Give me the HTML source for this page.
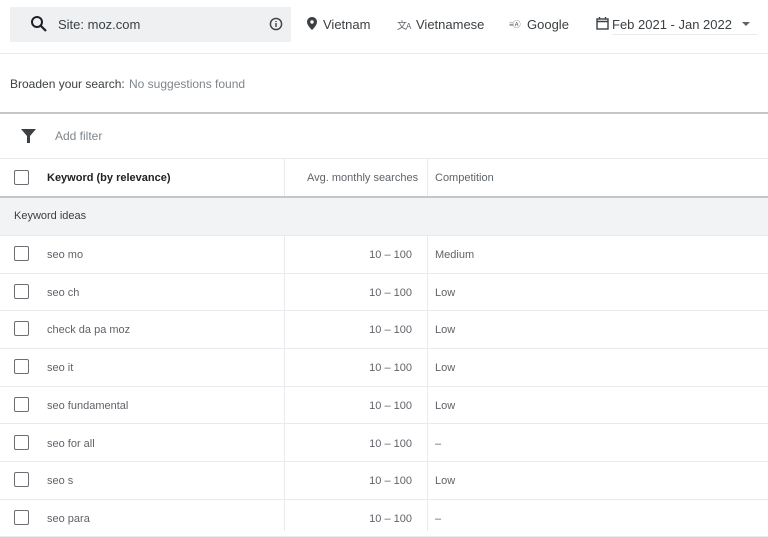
<!DOCTYPE html>
<html><head><meta charset="utf-8"><style>
*{margin:0;padding:0;box-sizing:border-box}
body{width:768px;height:531px;overflow:hidden;background:#fff;font-family:"Liberation Sans",Arial,sans-serif;color:#3c4043;position:relative}
.a{position:absolute}
.t{font-size:12px;color:#5f6368}
.hl{position:absolute;left:0;width:768px;height:1px;background:#e8eaed}
.cb{position:absolute;left:14px;width:15px;height:15px;border:1.6px solid #6b6f73;border-radius:2px}
.vl{position:absolute;width:1px;background:#e8eaed}
</style></head><body>
<div class="a" style="left:10px;top:7px;width:281px;height:35px;background:#eef0f2"></div>
<svg class="a" style="left:30px;top:15px" width="18" height="18" viewBox="0 0 18 18"><circle cx="7" cy="7" r="5" fill="none" stroke="#202124" stroke-width="2"/><path d="M11 11l5 5" stroke="#202124" stroke-width="2.2"/></svg>
<div class="a" style="left:58px;top:17px;font-size:13px;color:#3c4043">Site: moz.com</div>
<svg class="a" style="left:269px;top:17px" width="14" height="14" viewBox="0 0 14 14"><circle cx="7" cy="7" r="5.6" fill="none" stroke="#3c4043" stroke-width="1.4"/><path d="M7 6v4M7 4v1" stroke="#3c4043" stroke-width="1.4"/></svg>
<svg class="a" style="left:307px;top:17px" width="10" height="13" viewBox="0 0 10 13"><path d="M5 0C2.2 0 0 2.2 0 5c0 3.5 5 8 5 8s5-4.5 5-8C10 2.2 7.8 0 5 0z" fill="#3c4043"/><circle cx="5" cy="5" r="1.7" fill="#fff"/></svg>
<div class="a" style="left:323px;top:17px;font-size:13px">Vietnam</div>
<div class="a" style="left:397px;top:17px;font-size:10px;color:#5f6368;letter-spacing:-1px">文<span style="font-size:8px">A</span></div>
<div class="a" style="left:416px;top:17px;font-size:13px">Vietnamese</div>
<div class="a" style="left:509px;top:19px;font-size:8px;color:#5f6368;letter-spacing:-1px">≡Ⓐ</div>
<div class="a" style="left:527px;top:17px;font-size:13px">Google</div>
<svg class="a" style="left:596px;top:17px" width="13" height="13" viewBox="0 0 13 13"><rect x="1" y="2" width="11" height="10" fill="none" stroke="#3c4043" stroke-width="1.4"/><path d="M1 4.5h11M3.5 0v2.5M9.5 0v2.5" stroke="#3c4043" stroke-width="1.4"/></svg>
<div class="a" style="left:612px;top:17px;font-size:13px">Feb 2021 - Jan 2022</div>
<div class="a" style="left:742px;top:22px;width:0;height:0;border-left:4px solid transparent;border-right:4px solid transparent;border-top:4px solid #5f6368"></div>
<div class="a" style="left:612px;top:34px;width:145px;height:1px;background:#e8eaed"></div>
<div class="hl" style="top:53px"></div>
<div class="a" style="left:10px;top:77px;font-size:12px;color:#3c4043">Broaden your search:</div>
<div class="a" style="left:129px;top:77px;font-size:12px;color:#80868b">No suggestions found</div>
<div class="hl" style="top:112px;height:2px;background:#c4c7c9"></div>
<svg class="a" style="left:21px;top:129px" width="15" height="14" viewBox="0 0 15 14"><path d="M0 0h15L9 7v7H6V7z" fill="#3c4043"/></svg>
<div class="a" style="left:55px;top:129px;font-size:12px;color:#80868b">Add filter</div>
<div class="hl" style="top:158px"></div>
<div class="cb" style="top:170px"></div>
<div class="a" style="left:47px;top:172px;font-size:11px;font-weight:bold;color:#202124">Keyword (by relevance)</div>
<div class="a" style="left:307px;top:172px;font-size:11px;color:#5f6368">Avg. monthly searches</div>
<div class="a" style="left:435px;top:172px;font-size:11px;color:#5f6368">Competition</div>
<div class="vl" style="left:284px;top:158px;height:39px"></div>
<div class="vl" style="left:427px;top:158px;height:39px"></div>
<div class="hl" style="top:196px;height:2px;background:#c4c7c9"></div>
<div class="a" style="left:0;top:198px;width:768px;height:37px;background:#f1f3f4"></div>
<div class="a t" style="left:14px;top:210px;color:#3c4043;font-size:11px">Keyword ideas</div>
<div class="hl" style="top:235px"></div>
<div class="vl" style="left:284px;top:235px;height:296px"></div>
<div class="vl" style="left:427px;top:235px;height:296px"></div>
<div id="rows"></div>
<script>
var d=[["seo mo","Medium"],["seo ch","Low"],["check da pa moz","Low"],["seo it","Low"],["seo fundamental","Low"],["seo for all","–"],["seo s","Low"],["seo para","–"]];
var h="";d.forEach(function(r,i){var c=254+i*37.7;
h+='<div class="cb" style="top:'+(c-8)+'px"></div><div class="a t" style="left:47px;top:'+(c-5)+'px;font-size:11px">'+r[0]+'</div><div class="a t" style="left:340px;width:72px;text-align:right;top:'+(c-5)+'px;font-size:11px">10 – 100</div><div class="a t" style="left:435px;top:'+(c-5)+'px;font-size:11px">'+r[1]+'</div><div class="hl" style="top:'+Math.round(c+18.5)+'px"></div>';});
document.getElementById("rows").innerHTML=h;
</script>
</body></html>
